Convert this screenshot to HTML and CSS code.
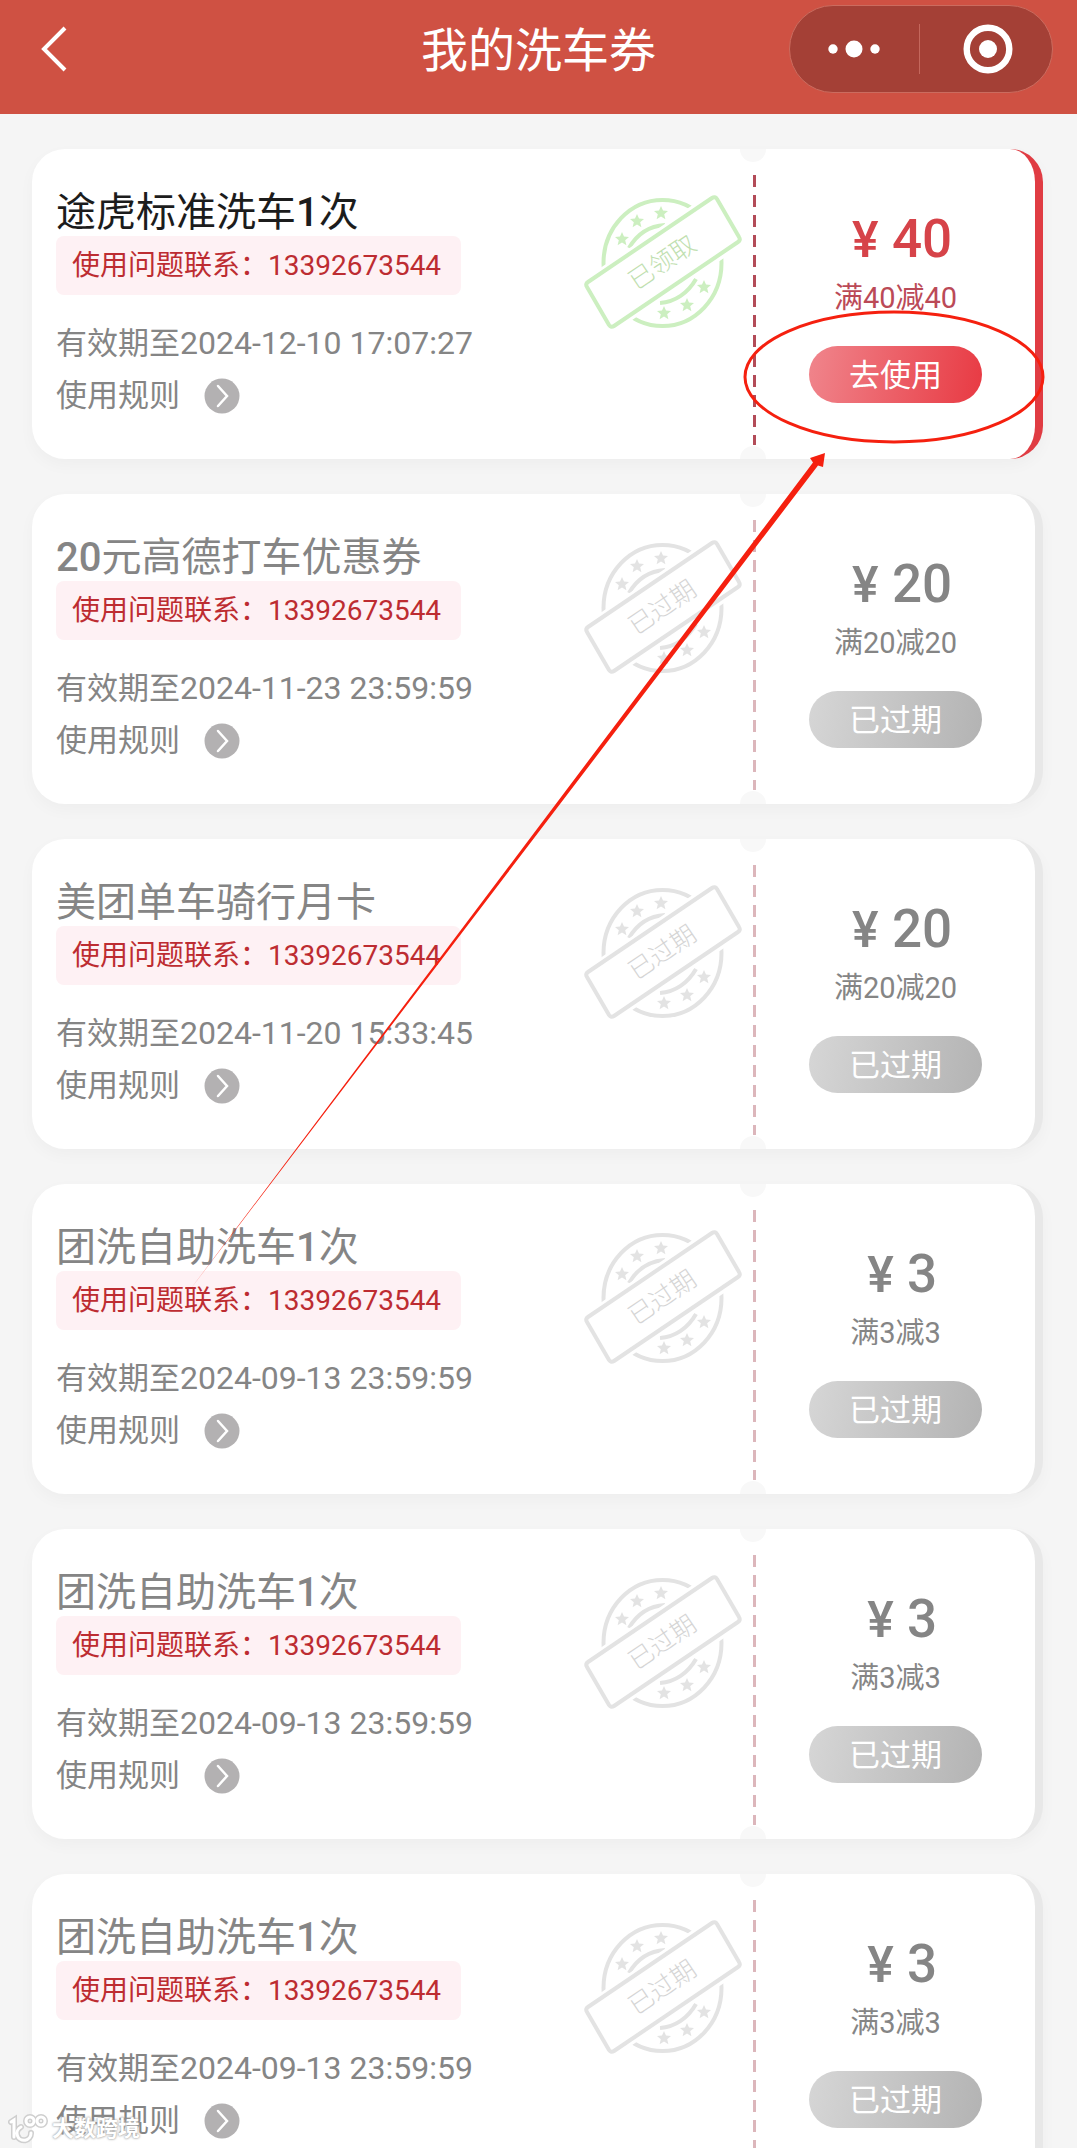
FILE: index.html
```
<!DOCTYPE html>
<html lang="zh-CN">
<head>
    <meta charset="UTF-8">
    <meta name="viewport" content="width=device-width, initial-scale=1.0">
    <title>我的洗车券</title>
    <link rel="stylesheet" href="styles.css">
</head>
<body>
    <!-- Shared shapes -->
    <svg class="sprite" aria-hidden="true">
        <symbol id="stamp" viewBox="0 0 160 136">
            <ellipse cx="79.5" cy="69" rx="59" ry="63" fill="none" stroke="currentColor" stroke-width="4"/>
            <path d="M46 54C54 40 67 32 82 31M77 109C92 108 105 99 113 85" fill="none" stroke="currentColor" stroke-width="4"/>
            <g fill="currentColor">
                <path id="star" d="M39 38l2 4.600 5 .4-3.800 3.300 1.200 4.900-4.400-2.600-4.400 2.600 1.200-4.900-3.800-3.300 5-.4z"/>
                <use href="#star" x="15" y="-18"/>
                <use href="#star" x="39" y="-26"/>
                <use href="#star" x="82" y="48"/>
                <use href="#star" x="65" y="66"/>
                <use href="#star" x="42" y="74"/>
            </g>
            <path d="M3 91L132 3L157 46L28 133z" fill="#fff" stroke="#fff" stroke-width="12"/>
            <path d="M5 88L129 4Q132 2 134 5L156 43Q158 46 155 48L31 132Q28 134 26 131L4 93Q2 90 5 88z" fill="#fff" stroke="currentColor" stroke-width="4"/>
        </symbol>
        <symbol id="arrow" viewBox="0 0 36 36">
            <circle cx="18" cy="18" r="17.500" fill="#b3b1b2"/>
            <path d="M14 8l9 10-9 10" fill="none" stroke="#fff" stroke-width="2.500" stroke-linecap="round"/>
        </symbol>
    </svg>

    <div class="page">
        <header class="navbar">
            <button class="back" aria-label="返回">
                <svg width="28" height="50" viewBox="0 0 28 50"><path d="M24 4L3 25l21 21" fill="none" stroke="#fff" stroke-width="4"/></svg>
            </button>
            <h1>我的洗车券</h1>
            <div class="capsule">
                <button aria-label="更多">
                    <svg width="52" height="18" viewBox="0 0 52 18" fill="#fff"><circle cx="5" cy="9" r="4.700"/><circle cx="26" cy="9" r="8.500"/><circle cx="47" cy="9" r="4.700"/></svg>
                </button>
                <button aria-label="关闭">
                    <svg width="50" height="50" viewBox="0 0 50 50"><circle cx="25" cy="25" r="21.300" fill="none" stroke="#fff" stroke-width="6.400"/><circle cx="25" cy="25" r="9" fill="#fff"/></svg>
                </button>
            </div>
        </header>

        <main class="coupons">
            <article class="coupon active">
                <div class="info">
                    <div class="details">
                        <h2>途虎标准洗车<b>1</b>次</h2>
                        <p class="contact">使用问题联系：13392673544</p>
                        <p class="expiry">有效期至<time>2024-12-10 17:07:27</time></p>
                        <a class="rules" href="#">使用规则 <svg class="rules-icon"><use href="#arrow"/></svg></a>
                    </div>
                    <svg class="stamp" viewBox="0 0 160 136"><use href="#stamp"/><text x="79" y="77" transform="rotate(-34 79 68)">已领取</text></svg>
                </div>
                <div class="divider"></div>
                <div class="offer">
                    <p class="price"><span class="yen">¥</span>40</p>
                    <p class="condition">满40减40</p>
                    <button class="use">去使用</button>
                </div>
                <!-- Circle round the button -->
                <svg class="ring" viewBox="0 0 304 134"><ellipse cx="152" cy="67" rx="149" ry="65" fill="none" stroke="#f5200f" stroke-width="3"/></svg>
            </article>

            <article class="coupon">
                <div class="info">
                    <div class="details">
                        <h2><b>20</b>元高德打车优惠券</h2>
                        <p class="contact">使用问题联系：13392673544</p>
                        <p class="expiry">有效期至<time>2024-11-23 23:59:59</time></p>
                        <a class="rules" href="#">使用规则 <svg class="rules-icon"><use href="#arrow"/></svg></a>
                    </div>
                    <svg class="stamp" viewBox="0 0 160 136"><use href="#stamp"/><text x="79" y="77" transform="rotate(-34 79 68)">已过期</text></svg>
                </div>
                <div class="divider"></div>
                <div class="offer">
                    <p class="price"><span class="yen">¥</span>20</p>
                    <p class="condition">满20减20</p>
                    <button class="use" disabled>已过期</button>
                </div>
            </article>

            <article class="coupon">
                <div class="info">
                    <div class="details">
                        <h2>美团单车骑行月卡</h2>
                        <p class="contact">使用问题联系：13392673544</p>
                        <p class="expiry">有效期至<time>2024-11-20 15:33:45</time></p>
                        <a class="rules" href="#">使用规则 <svg class="rules-icon"><use href="#arrow"/></svg></a>
                    </div>
                    <svg class="stamp" viewBox="0 0 160 136"><use href="#stamp"/><text x="79" y="77" transform="rotate(-34 79 68)">已过期</text></svg>
                </div>
                <div class="divider"></div>
                <div class="offer">
                    <p class="price"><span class="yen">¥</span>20</p>
                    <p class="condition">满20减20</p>
                    <button class="use" disabled>已过期</button>
                </div>
            </article>

            <article class="coupon">
                <div class="info">
                    <div class="details">
                        <h2>团洗自助洗车<b>1</b>次</h2>
                        <p class="contact">使用问题联系：13392673544</p>
                        <p class="expiry">有效期至<time>2024-09-13 23:59:59</time></p>
                        <a class="rules" href="#">使用规则 <svg class="rules-icon"><use href="#arrow"/></svg></a>
                    </div>
                    <svg class="stamp" viewBox="0 0 160 136"><use href="#stamp"/><text x="79" y="77" transform="rotate(-34 79 68)">已过期</text></svg>
                </div>
                <div class="divider"></div>
                <div class="offer">
                    <p class="price"><span class="yen">¥</span>3</p>
                    <p class="condition">满3减3</p>
                    <button class="use" disabled>已过期</button>
                </div>
            </article>

            <article class="coupon">
                <div class="info">
                    <div class="details">
                        <h2>团洗自助洗车<b>1</b>次</h2>
                        <p class="contact">使用问题联系：13392673544</p>
                        <p class="expiry">有效期至<time>2024-09-13 23:59:59</time></p>
                        <a class="rules" href="#">使用规则 <svg class="rules-icon"><use href="#arrow"/></svg></a>
                    </div>
                    <svg class="stamp" viewBox="0 0 160 136"><use href="#stamp"/><text x="79" y="77" transform="rotate(-34 79 68)">已过期</text></svg>
                </div>
                <div class="divider"></div>
                <div class="offer">
                    <p class="price"><span class="yen">¥</span>3</p>
                    <p class="condition">满3减3</p>
                    <button class="use" disabled>已过期</button>
                </div>
            </article>

            <article class="coupon">
                <div class="info">
                    <div class="details">
                        <h2>团洗自助洗车<b>1</b>次</h2>
                        <p class="contact">使用问题联系：13392673544</p>
                        <p class="expiry">有效期至<time>2024-09-13 23:59:59</time></p>
                        <a class="rules" href="#">使用规则 <svg class="rules-icon"><use href="#arrow"/></svg></a>
                    </div>
                    <svg class="stamp" viewBox="0 0 160 136"><use href="#stamp"/><text x="79" y="77" transform="rotate(-34 79 68)">已过期</text></svg>
                </div>
                <div class="divider"></div>
                <div class="offer">
                    <p class="price"><span class="yen">¥</span>3</p>
                    <p class="condition">满3减3</p>
                    <button class="use" disabled>已过期</button>
                </div>
            </article>

            <!-- Pointer up to the active coupon -->
            <svg class="pointer" viewBox="0 0 640 840">
                <path d="M4 838L628 9.500L625 5L640 0L638 14L633 12.500z" fill="#f5200f"/>
            </svg>
        </main>

        <div class="watermark">
            <svg width="40" height="30" viewBox="0 0 40 30" fill="none" stroke-linecap="round">
                <g stroke="#cfcfcf" stroke-width="6"><path d="M3 8l3-2v17M13 13a7 7 0 1 0 10 6"/><circle cx="22" cy="7" r="4"/><circle cx="33" cy="7" r="4"/></g>
                <g stroke="#fff" stroke-width="3"><path d="M3 8l3-2v17M13 13a7 7 0 1 0 10 6"/><circle cx="22" cy="7" r="4"/><circle cx="33" cy="7" r="4"/></g>
            </svg>
            <span>大数跨境</span>
        </div>
    </div>
</body>
</html>
```
FILE: styles.css
```
* {
    box-sizing: border-box;
}

body {
    margin: 0;
    background-color: #f5f5f5;
    color: #858585;
    font-family: Roboto, "Noto Sans CJK SC", sans-serif;
}

h1, h2, p {
    margin: 0;
}

button {
    padding: 0;
    border: none;
    background: none;
    font-family: inherit;
    cursor: pointer;
}

svg {
    display: block;
}

.sprite {
    position: absolute;
    width: 0;
    height: 0;
}

.page {
    position: relative;
    height: 100vh;
    overflow: hidden;
}

/* Top bar */
.navbar {
    display: grid;
    grid-template-columns: 1fr auto 1fr;
    align-items: center;
    padding: 5px 24px 21px;
    background-color: #cf5143;
    color: #fff;
}

.navbar h1 {
    padding-top: 4px;
    font-size: 47px;
    font-weight: 400;
    line-height: 84px;
}

.back {
    justify-self: start;
    padding-left: 17px;
}

.capsule {
    justify-self: end;
    display: flex;
    width: 264px;
    height: 88px;
    padding: 18px 0;
    border: 1px solid #cb6c5f;
    border-radius: 44px;
    background-color: #a44036;
}

.capsule button {
    flex: 1;
    display: flex;
    align-items: center;
    justify-content: center;
}

.capsule button + button {
    padding-left: 4px;
    border-left: 1px solid #c4675c;
}

/* Coupon list */
.coupons {
    position: relative;
    display: flex;
    flex-direction: column;
    gap: 35px;
    padding: 35px 34px 35px 32px;
}

.coupon {
    position: relative;
    display: flex;
    flex-shrink: 0;
    border-right: 8px solid #e8e8e8;
    border-radius: 33px;
    background-color: #fff;
    box-shadow: 0 6px 16px rgba(0, 0, 0, 0.03);
}

.coupon.active {
    border-right-color: #e03c43;
}

.info {
    flex: 1;
    display: flex;
    justify-content: space-between;
    align-items: flex-start;
    padding: 41px 10px 37px 24px;
}

.details h2 {
    font-size: 40px;
    font-weight: 400;
    line-height: 46px;
}

.details b {
    font-weight: 500;
}

.active h2 {
    color: #1c1c1c;
}

.contact {
    width: fit-content;
    padding: 0 20px 0 16px;
    border-radius: 8px;
    background-color: #fef1f4;
    color: #bd2c31;
    font-size: 28px;
    line-height: 59px;
}

.expiry {
    margin-top: 22px;
    font-size: 31px;
    line-height: 52px;
}

.expiry time {
    font-size: 32px;
}

.rules {
    display: flex;
    align-items: center;
    gap: 24px;
    width: fit-content;
    color: inherit;
    font-size: 31px;
    line-height: 52px;
    text-decoration: none;
}

.rules-icon {
    width: 36px;
    height: 36px;
}

.stamp {
    width: 160px;
    height: 136px;
    margin-top: 4px;
    color: #e3e3e3;
}

.stamp text {
    fill: #d5d5d5;
    font-size: 25px;
    font-weight: 300;
    text-anchor: middle;
}

.active .stamp {
    color: #ccefc0;
}

.active .stamp text {
    fill: #bfe0b0;
}

/* Tear line with a notch at each end */
.divider {
    position: relative;
    width: 3px;
    margin: 26px 0 14px;
    background: repeating-linear-gradient(#dcb6bb 0 12px, transparent 12px 20px);
}

.active .divider {
    background: repeating-linear-gradient(#b34c58 0 12px, transparent 12px 20px);
}

.divider::before,
.divider::after {
    content: "";
    position: absolute;
    left: -13px;
    width: 26px;
    height: 13px;
    background-color: #f8f8f8;
}

.divider::before {
    top: -26px;
    border-radius: 0 0 13px 13px;
}

.divider::after {
    bottom: -14px;
    border-radius: 13px 13px 0 0;
}

.offer {
    flex: 0 0 279px;
    display: flex;
    flex-direction: column;
    align-items: center;
    padding-top: 60px;
}

.price {
    height: 60px;
    font-size: 53px;
    font-weight: 500;
    line-height: 60px;
}

.yen {
    display: inline-block;
    width: 53px;
    font-size: 50px;
    text-align: center;
}

.condition {
    margin-top: 7px;
    font-size: 29px;
    line-height: 44px;
}

.active .price {
    color: #d64349;
}

.active .condition {
    color: #bb4a57;
}

.use {
    width: 173px;
    height: 57px;
    margin-top: 26px;
    padding-bottom: 5px;
    border-radius: 29px;
    background: linear-gradient(100deg, #f0858c, #e83a43);
    color: #fff;
    font-size: 31px;
}

.use:disabled {
    background: linear-gradient(100deg, #d6d6d6, #b3b3b3);
    cursor: default;
}

/* Marks drawn over the list */
.ring {
    position: absolute;
    top: 161px;
    right: -11px;
    width: 304px;
    height: 134px;
    pointer-events: none;
}

.pointer {
    position: absolute;
    top: 339px;
    right: 252px;
    width: 640px;
    height: 840px;
    pointer-events: none;
}

.watermark {
    position: absolute;
    left: 8px;
    bottom: 3px;
    display: flex;
    align-items: center;
    gap: 4px;
    color: #fff;
    font-size: 22px;
    font-weight: 700;
    line-height: 32px;
    text-shadow: 0 0 2px #999, 0 0 3px #bbb;
}
```
